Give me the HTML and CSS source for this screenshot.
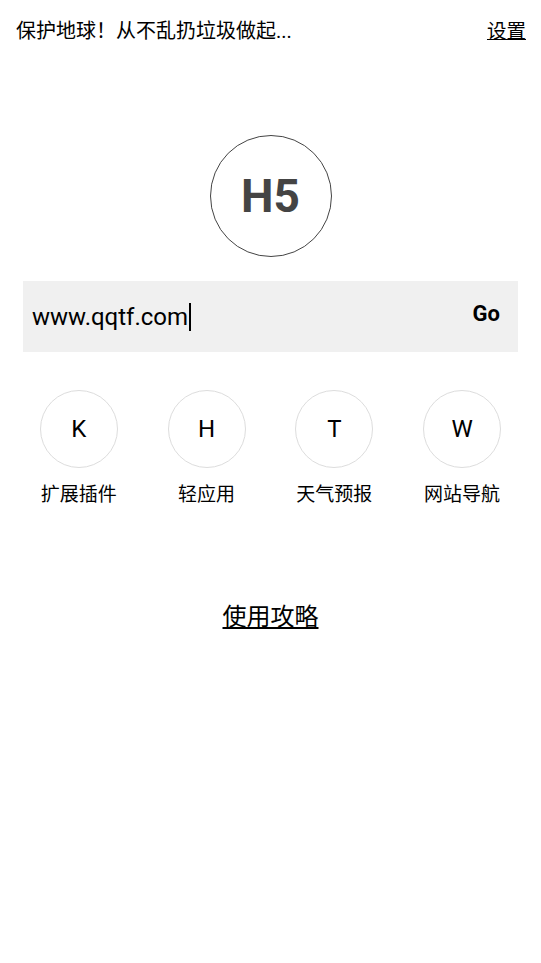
FILE: index.html
```html
<!DOCTYPE html>
<html lang="zh">

<head>
    <meta charset="UTF-8">
    <meta name="viewport" content="width=device-width, initial-scale=1.0">
    <title>H5 浏览器</title>
    <link rel="stylesheet" href="styles.css">
</head>

<body>

    <div class="topbar">
        <span class="slogan">保护地球！从不乱扔垃圾做起...</span>
        <a class="settings" href="#">设置</a>
    </div>

    <div class="logo">H5</div>

    <!-- 地址栏 -->
    <div class="search">
        <div class="url">www.qqtf.com<span class="caret"></span></div>
        <button class="go">Go</button>
    </div>

    <!-- 快捷入口 -->
    <div class="shortcuts">
        <div class="item">
            <div class="circle">K</div>
            <div class="label">扩展插件</div>
        </div>
        <div class="item">
            <div class="circle">H</div>
            <div class="label">轻应用</div>
        </div>
        <div class="item">
            <div class="circle">T</div>
            <div class="label">天气预报</div>
        </div>
        <div class="item">
            <div class="circle">W</div>
            <div class="label">网站导航</div>
        </div>
    </div>

    <div class="guide">
        <a href="#">使用攻略</a>
    </div>

</body>

</html>
```

FILE: styles.css
```css
body {
    margin: 0;
    font-family: Roboto, "Noto Sans CJK SC", sans-serif;
    color: #000;
    background: #fff;
}

a {
    color: #000;
}

.topbar {
    display: flex;
    justify-content: space-between;
    align-items: center;
    height: 58px;
    padding: 0 15px 0 16px;
}

.slogan {
    font-size: 20px;
}

.settings {
    font-size: 19.5px;
}

.logo {
    width: 120px;
    height: 120px;
    margin: 77px auto 0;
    border: 1px solid #444;
    border-radius: 50%;
    display: flex;
    align-items: center;
    justify-content: center;
    font-size: 46px;
    font-weight: bold;
    color: #444;
}

.search {
    display: flex;
    align-items: center;
    justify-content: space-between;
    height: 71px;
    margin: 24px 23px 0;
    background: #f0f0f0;
}

.url {
    display: flex;
    align-items: center;
    padding-left: 9px;
    font-size: 24px;
}

.caret {
    display: inline-block;
    width: 2px;
    height: 28px;
    margin-left: 1px;
    background: #000;
}

.go {
    border: none;
    background: none;
    padding: 0 18px 6px 0;
    font-family: Roboto, sans-serif;
    font-size: 22px;
    font-weight: bold;
    color: #000;
}

.shortcuts {
    display: grid;
    grid-template-columns: repeat(4, 1fr);
    margin: 38px 15px 0;
}

.item {
    display: flex;
    flex-direction: column;
    align-items: center;
}

.circle {
    width: 76px;
    height: 76px;
    border: 1px solid #ddd;
    border-radius: 50%;
    display: flex;
    align-items: center;
    justify-content: center;
    font-size: 24px;
}

.label {
    margin-top: 14px;
    font-size: 19px;
    line-height: 26px;
}

.guide {
    margin-top: 89px;
    text-align: center;
    font-size: 24px;
}
```
